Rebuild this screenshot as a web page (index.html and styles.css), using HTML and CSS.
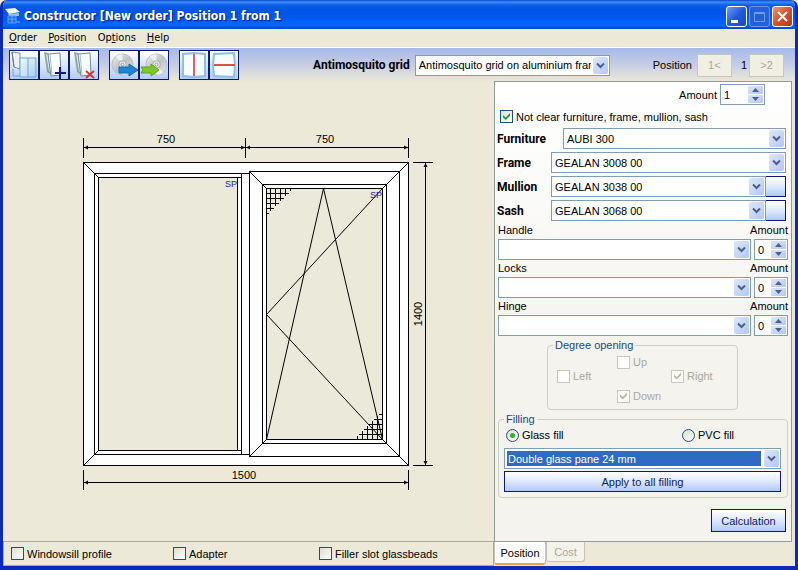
FILE: index.html
```html
<!DOCTYPE html>
<html lang="en">
<head>
<meta charset="utf-8">
<meta name="viewport" content="width=device-width, initial-scale=1">
<title>Constructor [New order] Position 1 from 1</title>
<link rel="stylesheet" href="styles.css">
</head>
<body>
<svg class="defs" width="0" height="0" aria-hidden="true">
  <defs>
    <linearGradient id="btn" x1="0" y1="0" x2="1" y2="1"><stop offset="0" stop-color="#dde6fd"/><stop offset="1" stop-color="#b3c7f5"/></linearGradient>
    <linearGradient id="pane" x1="0" y1="0" x2="1" y2="1"><stop offset="0" stop-color="#f4fbff"/><stop offset="1" stop-color="#a5cdf0"/></linearGradient>
    <linearGradient id="disc" x1="0" y1="0" x2="1" y2="1"><stop offset="0" stop-color="#eeeeee"/><stop offset=".5" stop-color="#bfc3c6"/><stop offset="1" stop-color="#e8e8e8"/></linearGradient>
    <symbol id="drop" viewBox="0 0 15 17">
      <rect width="15" height="17" rx="2" fill="url(#btn)"/>
      <path d="M4 6.500l3.500 3.500L11 6.500" fill="none" stroke="#4d6185" stroke-width="2"/>
    </symbol>
    <symbol id="spin" viewBox="0 0 15 17">
      <rect width="15" height="8" rx="1" fill="url(#btn)"/><rect y="9" width="15" height="8" rx="1" fill="url(#btn)"/>
      <path d="M4 6l3.500-4L11 6zM4 11h7l-3.500 4z" fill="#4d6185"/>
    </symbol>
    <symbol id="sash" viewBox="0 0 28 28">
      <path d="M4 1l4 1 3 22-4-3z" fill="#8fa3a8"/>
      <path d="M6 3l2 1 2 17-1-1z" fill="#dfe9ee"/>
      <path d="M8 3l12-1 1 22-10 1z" fill="#fafdff" stroke="#6d8f98"/>
      <path d="M10 3l2 21" stroke="#9ec6d2"/>
    </symbol>
    <symbol id="cd" viewBox="0 0 24 24">
      <circle cx="12" cy="12" r="11" fill="url(#disc)" stroke="#b9bcc0"/>
      <path d="M12 12L5 3.500A11 11 0 0 1 12 1zM12 12l7 8.500a11 11 0 0 1-7 2.500z" fill="#fff" opacity=".6"/>
      <circle cx="12" cy="12" r="4" fill="#e4e4e4" stroke="#aaa"/><circle cx="12" cy="12" r="1.500" fill="#fff" stroke="#999"/>
    </symbol>
  </defs>
</svg>

<div class="window">
  <header class="titlebar">
    <svg class="app-icon" width="16" height="16" viewBox="0 0 16 16" aria-hidden="true">
      <path d="M0 1l10-1 5 4-11 2z" fill="#f3f6fa"/><path d="M3 6l11-1v3H4z" fill="#9cc0ea"/>
      <path d="M3 8h8v7H3z" fill="#1f6be0" stroke="#5b9aef"/><path d="M3 11h8M7 8v7M11 14h4" stroke="#6fa8f2"/>
    </svg>
    <h1>Constructor [New order] Position 1 from 1</h1>
    <div class="caption-buttons">
      <button class="cap" aria-label="Minimize"><svg width="19" height="19" viewBox="0 0 19 19"><path d="M4 13h7v3H4z" fill="#fff"/></svg></button>
      <button class="cap dim" aria-label="Maximize" disabled><svg width="19" height="19" viewBox="0 0 19 19"><path d="M4.500 5.500h10v9h-10zM4 6.500h11" fill="none" stroke="#6f9bf2"/></svg></button>
      <button class="cap close" aria-label="Close"><svg width="19" height="19" viewBox="0 0 19 19"><path d="M5 5l9 9M14 5l-9 9" stroke="#fff" stroke-width="2"/></svg></button>
    </div>
  </header>

  <nav class="menu">
    <button><u>O</u>rder</button><button><u>P</u>osition</button><button>Op<u>t</u>ions</button><button><u>H</u>elp</button>
  </nav>

  <div class="toolbar">
    <div class="tools">
      <button class="tool" aria-label="Window layout"><svg width="28" height="28" viewBox="0 0 28 28">
        <path d="M2 1l8 1v16l-6-2z" fill="#e9f3f8" stroke="#7c95a0"/><path d="M2 1l2 15" stroke="#5f7a84"/>
        <path d="M10 7h16v19H10z" fill="url(#pane)" stroke="#6aa5d3"/><path d="M18 7v19M3 18v7h7" fill="none" stroke="#6aa5d3"/></svg></button>
      <button class="tool" aria-label="Add sash"><svg width="28" height="28" viewBox="0 0 28 28"><use href="#sash" width="28" height="28"/><path d="M20 16v12M15 22h11" stroke="#17177e" stroke-width="2"/></svg></button>
      <button class="tool" aria-label="Delete sash"><svg width="28" height="28" viewBox="0 0 28 28"><use href="#sash" width="28" height="28"/><path d="M16 20l8 7M24 20l-8 7" stroke="#d93232" stroke-width="2"/></svg></button>
    </div>
    <div class="tools">
      <button class="tool" aria-label="Save"><svg width="28" height="28" viewBox="0 0 28 28"><use href="#cd" x="1" y="2" width="23" height="23"/><path d="M9 16h10v-3l9 6-9 6v-3H9z" fill="#1c86d6" stroke="#1269b2"/></svg></button>
      <button class="tool" aria-label="Load"><svg width="28" height="28" viewBox="0 0 28 28"><use href="#cd" x="5" y="2" width="23" height="23"/><path d="M1 16h10v-3l8 6-8 6v-3H1l2-3z" fill="#7cc92c" stroke="#5da41d"/></svg></button>
    </div>
    <div class="tools">
      <button class="tool" aria-label="Vertical mullion"><svg width="28" height="28" viewBox="0 0 28 28"><path d="M3 3l11-1 11 1v22l-11 1-11-1z" fill="#f6fbff" stroke="#8cbfe2" stroke-width="2"/><path d="M14 3v22" stroke="#d8645c" stroke-width="2"/></svg></button>
      <button class="tool" aria-label="Horizontal mullion"><svg width="28" height="28" viewBox="0 0 28 28"><path d="M4 3l20-1 1 12-1 12-20-1-1-11z" fill="#f6fbff" stroke="#8cbfe2" stroke-width="2"/><path d="M4 14h21" stroke="#d8514a" stroke-width="2"/></svg></button>
    </div>
    <div class="grid-choice">
      <label class="strong" for="grid">Antimosquito grid</label>
      <span class="combo"><select id="grid"><option>Antimosquito grid on aluminium frame</option></select><svg><use href="#drop"/></svg></span>
    </div>
    <div class="pager">
      <span>Position</span><button disabled>1&lt;</button><span class="page">1</span><button disabled>&gt;2</button>
    </div>
  </div>

  <main class="work">
    <section class="left">
      <div class="canvas">
        <svg class="drawing" width="360" height="365" viewBox="80 130 360 365" role="img" aria-label="Window drawing">
          <g fill="none" stroke="#000" shape-rendering="crispEdges">
            <path d="M83.500 162.500h325v303h-325z" fill="#fff"/>
            <path d="M94.500 173.500h155M94.500 173.500v281h155M241.500 173.500v281"/>
            <path d="M98.500 177.500h139v273h-139z" fill="#ebe9da"/>
            <path d="M237.500 177.500h4M237.500 450.500h4"/>
            <path d="M249.500 171.500h150v285h-150z" fill="#fff"/>
            <path d="M262.500 184.500h124v259h-124z"/>
            <path d="M266.500 188.500h116v251h-116z" fill="#ebe9da"/>
          </g>
          <g fill="none" stroke="#000">
            <path d="M83.500 162.500l15 15M83.500 465.500l15-15M408.500 162.500l-26 26M408.500 465.500l-26-26M249.500 171.500l17 17M249.500 456.500l17-17"/>
            <path d="M266.500 439.500l57-251 59 251M382.500 188.500l-116 126 116 125"/>
          </g>
          <g fill="none" stroke="#000" shape-rendering="crispEdges">
            <path d="M270.500 188v23M275.500 188v18M280.500 188v13M285.500 188v8M290.500 188v3M266 193.500h23M266 198.500h18M266 203.500h13M266 208.500h8M266 213.500h3"/>
            <path d="M377.500 439v-23M372.500 439v-18M367.500 439v-13M362.500 439v-8M357.500 439v-3M382 434.500h-23M382 429.500h-18M382 424.500h-13M382 419.500h-8M382 414.500h-3"/>
            <path d="M83.500 138v20M245.500 138v20M408.500 138v20M83 147.500h325M83.500 470v20M408.500 470v20M83 482.500h325M413 162.500h20M413 465.500h20M425.500 162v303"/>
          </g>
          <path d="M84 147.500l4-2v4zM245 147.500l-4-2v4zM246 147.500l4-2v4zM408 147.500l-4-2v4zM84 482.500l4-2v4zM408 482.500l-4-2v4zM425.500 163l-2 4h4zM425.500 465l-2-4h4z"/>
          <g class="dims">
            <text x="166" y="143">750</text><text x="325" y="143">750</text><text x="244" y="479">1500</text>
            <text transform="translate(422 314) rotate(-90)">1400</text>
          </g>
          <g class="marks"><text x="225" y="187">SP</text><text x="370" y="198">SP</text></g>
        </svg>
      </div>
      <div class="options">
        <label><input type="checkbox">Windowsill profile</label>
        <label><input type="checkbox">Adapter</label>
        <label><input type="checkbox">Filler slot glassbeads</label>
      </div>
    </section>

    <aside class="side">
      <form class="panel">
        <div class="total"><label for="amount">Amount</label><span class="spinner wide"><input id="amount" type="number" value="1"><svg><use href="#spin"/></svg></span></div>
        <label class="keep"><input type="checkbox" checked>Not clear furniture, frame, mullion, sash</label>
        <div class="profiles">
          <div class="row"><label class="strong long" for="furniture">Furniture</label><span class="combo"><select id="furniture"><option>AUBI 300</option></select><svg><use href="#drop"/></svg></span></div>
          <div class="row"><label class="strong" for="frame">Frame</label><span class="combo"><select id="frame"><option>GEALAN 3008 00</option></select><svg><use href="#drop"/></svg></span></div>
          <div class="row"><label class="strong" for="mullion">Mullion</label><span class="combo"><select id="mullion"><option>GEALAN 3038 00</option></select><svg><use href="#drop"/></svg></span><button type="button" class="push square" aria-label="Mullion details"></button></div>
          <div class="row"><label class="strong" for="sashsel">Sash</label><span class="combo"><select id="sashsel"><option>GEALAN 3068 00</option></select><svg><use href="#drop"/></svg></span><button type="button" class="push square" aria-label="Sash details"></button></div>
        </div>
        <div class="hardware">
          <label for="handle">Handle</label><label class="qty" for="handle-n">Amount</label>
          <span class="combo"><select id="handle"><option></option></select><svg><use href="#drop"/></svg></span><span class="spinner"><input id="handle-n" type="number" value="0"><svg><use href="#spin"/></svg></span>
          <label for="locks">Locks</label><label class="qty" for="locks-n">Amount</label>
          <span class="combo"><select id="locks"><option></option></select><svg><use href="#drop"/></svg></span><span class="spinner"><input id="locks-n" type="number" value="0"><svg><use href="#spin"/></svg></span>
          <label for="hinge">Hinge</label><label class="qty" for="hinge-n">Amount</label>
          <span class="combo"><select id="hinge"><option></option></select><svg><use href="#drop"/></svg></span><span class="spinner"><input id="hinge-n" type="number" value="0"><svg><use href="#spin"/></svg></span>
        </div>
        <fieldset class="degree">
          <legend>Degree opening</legend>
          <div class="compass">
            <label class="up"><input type="checkbox" disabled>Up</label>
            <label class="lt"><input type="checkbox" disabled>Left</label>
            <label class="rt"><input type="checkbox" checked disabled>Right</label>
            <label class="dn"><input type="checkbox" checked disabled>Down</label>
          </div>
        </fieldset>
        <fieldset class="filling">
          <legend>Filling</legend>
          <div class="kinds">
            <label><input type="radio" name="fill" checked>Glass fill</label>
            <label><input type="radio" name="fill">PVC fill</label>
          </div>
          <span class="combo chosen"><select aria-label="Filling type"><option>Double glass pane 24 mm</option></select><svg><use href="#drop"/></svg></span>
          <button type="button" class="push">Apply to all filling</button>
        </fieldset>
        <button type="button" class="push calc">Calculation</button>
      </form>
      <div class="tabs" role="tablist">
        <button role="tab" aria-selected="true" class="tab active">Position</button><button role="tab" class="tab" disabled>Cost</button>
      </div>
    </aside>
  </main>
</div>
</body>
</html>
```
FILE: styles.css
```css
* { box-sizing: border-box; }

body {
  margin: 0;
  background: #ece9d8;
  color: #000;
  font: 11px/14px "Liberation Sans", Arial, sans-serif;
}

button, input, select { font: inherit; color: inherit; margin: 0; }
button { padding: 0; border: 0; background: none; }
svg { display: block; }
.defs { position: absolute; }

.window {
  display: flex;
  flex-direction: column;
  min-height: 100vh;
  border: solid #0a2bb4;
  border-width: 0 3px 4px;
  border-radius: 7px 7px 0 0;
  overflow: hidden;
  background: #ece9d8;
}

/* Title bar */
.titlebar {
  display: flex;
  align-items: center;
  gap: 3px;
  height: 29px;
  margin: 0 -3px;
  padding: 3px 5px 0 5px;
  background: linear-gradient(#0a46c8 0, #3c8cff 2px, #0d5fe8 5px, #0054e3 10px, #0059f0 18px, #0766ff 25px, #0347c9 29px);
}
.titlebar h1 {
  flex: 1;
  margin: 0;
  color: #fff;
  font: bold 12px/16px "DejaVu Sans Condensed", "Noto Sans", sans-serif;
  text-shadow: 1px 1px 1px #0a1883;
}
.caption-buttons { display: flex; gap: 2px; }
.cap {
  width: 21px;
  height: 21px;
  border: 1px solid #fff;
  border-radius: 3px;
  background: linear-gradient(135deg, #6f9cf5, #2459dd 50%, #1a48c4);
}
.cap.dim { border-color: #6f95ee; background: #2460dd; }
.cap.close { background: linear-gradient(135deg, #ec9579, #d9502b 50%, #b93a17); }

/* Menu */
.menu {
  display: flex;
  gap: 11px;
  height: 19px;
  padding: 0 6px;
  border-bottom: 1px solid #fff;
  font: 11px/18px "DejaVu Sans Condensed", "Noto Sans", sans-serif;
}

/* Toolbar */
.toolbar {
  display: flex;
  align-items: center;
  gap: 10px;
  height: 34px;
  margin-bottom: -1px;
  padding: 0 11px 0 6px;
  background: linear-gradient(#a6b9e8, #c3cbe4 45%, #ece9d8);
}
.tools { display: flex; }
.tool {
  width: 30px;
  height: 30px;
  border: 1px solid #0a1a78;
  background: linear-gradient(#fff, #b3cbf8);
}
.grid-choice { display: flex; flex: 1; align-items: center; justify-content: flex-end; gap: 5px; }
.grid-choice .combo { flex: 0 0 195px; }
.strong { font: bold 12px/14px Roboto, "Liberation Sans", sans-serif; }
.pager { display: flex; align-items: center; gap: 5px; margin-left: 33px; }
.pager button { width: 35px; height: 23px; border: 1px solid #c9c7ba; background: #f1efe3; color: #aca899; }
.page { padding-left: 4px; margin-right: -3px; }

/* Fields */
.combo, .spinner { position: relative; display: block; flex: 1; min-width: 0; }
.combo select, .spinner input {
  display: block;
  width: 100%;
  height: 21px;
  border: 1px solid #7f9db9;
  border-radius: 0;
  background: #fff;
  padding: 0 18px 0 3px;
  appearance: none;
  outline: 0;
}
.spinner input { appearance: textfield; }
.spinner input::-webkit-inner-spin-button { appearance: none; margin: 0; }
.combo svg, .spinner svg {
  position: absolute;
  top: 2px;
  right: 2px;
  width: 15px;
  height: 17px;
  pointer-events: none;
}
.spinner.wide { flex: 0 0 45px; }

input[type="checkbox"], input[type="radio"] {
  appearance: none;
  flex: none;
  position: relative;
  width: 13px;
  height: 13px;
  border: 1px solid #1c5180;
  background: linear-gradient(135deg, #dcdcd7, #fff);
}
input[type="radio"] { border-radius: 50%; }
input[type="checkbox"]:checked::after {
  content: "";
  position: absolute;
  inset: 2px;
  background: #21a121;
  clip-path: polygon(0 28%, 40% 65%, 100% 0, 100% 38%, 40% 100%, 0 65%);
}
input[type="radio"]:checked::after {
  content: "";
  position: absolute;
  inset: 3px;
  border-radius: 50%;
  background: #2fae2f;
}
input[type="checkbox"]:disabled { border-color: #cac8bb; background: #fff; }
input[type="checkbox"]:disabled::after { background: #bbb8aa; }
label:has(input) { display: flex; align-items: center; gap: 3px; }
label:has(input:disabled) { color: #aca899; }

.push {
  height: 21px;
  border: 1px solid #0a1a78;
  background: linear-gradient(#fff, #dfe9fd 50%, #b0c8f7);
  color: #0a1a78;
}
.square { width: 21px; }

/* Work area */
.work { display: grid; flex: 1; grid-template-columns: minmax(0, 1fr) 301px; }
.left { display: flex; flex-direction: column; }
.canvas { flex: 1; padding: 49px 0 0 77px; }
.drawing { max-width: 100%; }
.dims { text-anchor: middle; }
.marks { font-size: 9px; fill: #2020c0; }
.options {
  display: grid;
  grid-template-columns: 162px 146px 1fr;
  height: 25px;
  padding: 0 7px;
  border: 1px solid #aca899;
}

/* Parameters */
.side { display: flex; flex-direction: column; padding-right: 3px; }
.panel {
  display: flex;
  flex: 1;
  flex-direction: column;
  padding: 2px 3px 9px;
  border: 1px solid #919b9c;
  background: linear-gradient(#fff, #f4f3ee 60%);
}
.total { display: flex; align-items: center; justify-content: flex-end; gap: 3px; padding-right: 23px; }
.keep { height: 23px; margin-left: 2px; }
.profiles { display: flex; flex-direction: column; gap: 3px; padding-right: 2px; }
.row { display: flex; align-items: center; }
.row label { width: 54px; margin-left: -1px; }
.row label.long { width: 66px; }
.row .square { margin-left: -1px; }
.hardware {
  display: grid;
  grid-template-columns: minmax(0, 1fr) 34px;
  column-gap: 3px;
  padding-top: 1px;
}
.hardware label { height: 17px; line-height: 17px; }
.hardware .qty { justify-self: end; white-space: nowrap; }

fieldset { min-width: 0; margin: 0; padding: 0; border: 1px solid #d0d0bf; border-radius: 4px; }
legend { margin-left: 5px; padding: 0 2px; color: #1a478f; line-height: 14px; }
.degree { width: 191px; margin: 2px auto 0 49px; }
.compass {
  display: grid;
  grid-template-columns: 60px 54px auto;
  grid-template-rows: 14px 20px 14px;
  padding: 3px 0 6px 9px;
}
.compass label { height: 14px; }
.up { grid-area: 1 / 2; }
.lt { grid-area: 2 / 1; }
.rt { grid-area: 2 / 3; }
.dn { grid-area: 3 / 2 / auto / span 2; }
.filling { display: flex; flex-direction: column; margin-top: 2px; padding: 0 6px 5px 5px; }
.filling legend { margin-left: 0; }
.kinds { display: grid; grid-template-columns: 176px 1fr; height: 22px; padding: 2px 2px 6px; }
.filling .push { width: 100%; margin-top: 2px; }
.chosen select {
  background: linear-gradient(#316ac5, #316ac5) 2px 2px / calc(100% - 21px) calc(100% - 4px) no-repeat #fff;
  color: #fff;
}
.calc { width: 75px; height: 23px; margin: auto 2px 0 auto; }

.tabs { display: flex; align-items: flex-start; height: 24px; }
.tab { width: 39px; height: 20px; border: 1px solid #c5c3b5; border-top: 0; border-radius: 0 0 3px 3px; background: #f4f3ec; color: #aca899; }
.tab.active { width: 52px; height: 23px; border-bottom: 2px solid #e8a33d; background: #fff; color: #000; }
```
